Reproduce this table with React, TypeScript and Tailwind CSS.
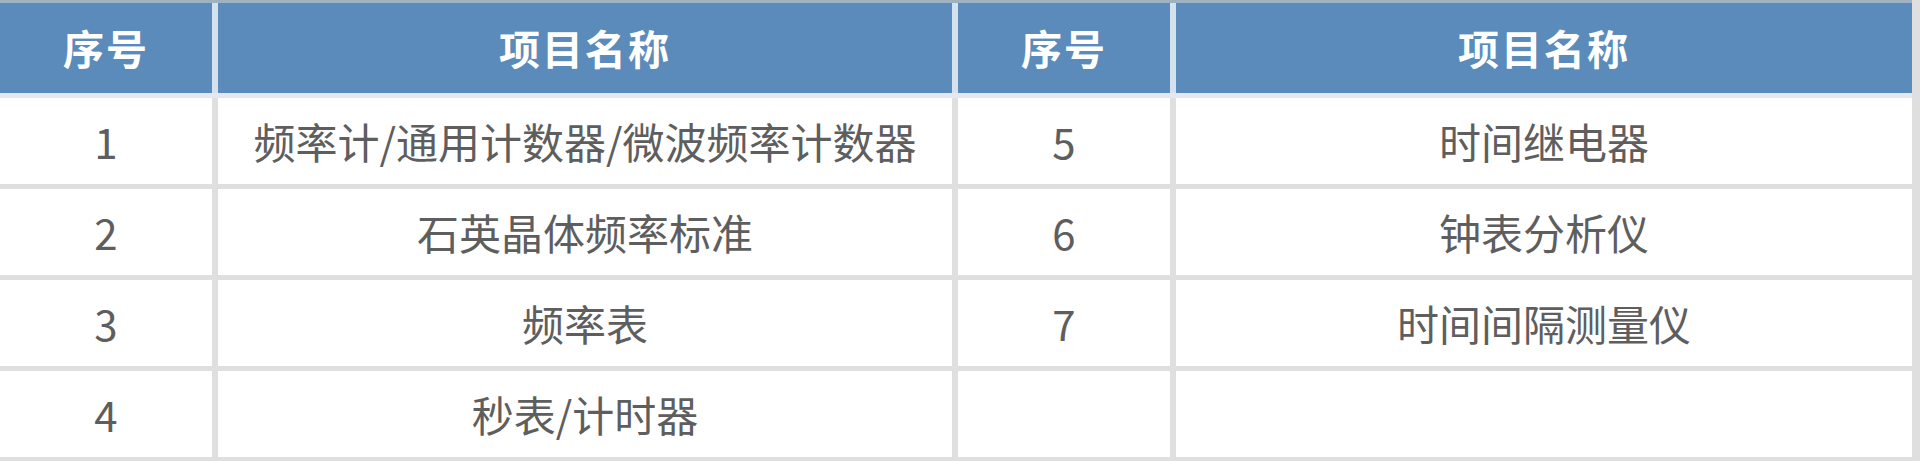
const rows: [string, string, string, string][] = [
  ['1', '频率计/通用计数器/微波频率计数器', '5', '时间继电器'],
  ['2', '石英晶体频率标准', '6', '钟表分析仪'],
  ['3', '频率表', '7', '时间间隔测量仪'],
  ['4', '秒表/计时器', '', ''],
]

const FONT = { fontFamily: '"Microsoft YaHei", "Noto Sans CJK SC", "Noto Sans", sans-serif' }

const cols = 'grid grid-cols-[212px_734px_212px_736px] gap-x-[6px]'

export default function App() {
  return (
    <div className="w-[1920px] h-[461px] bg-[#dfdfdf] overflow-hidden" style={FONT}>
      <div className="h-[3px] w-[1912px] bg-[#9fb2c4]" />
      <div className={`${cols} w-[1912px] bg-[#d4e2ee]`}>
        {['序号', '项目名称', '序号', '项目名称'].map((h, i) => (
          <div
            key={i}
            className="h-[90px] bg-[#5a8bba] flex items-center justify-center text-white font-bold text-[41px] tracking-[2px]"
          >
            {h}
          </div>
        ))}
      </div>
      <div className="h-[5px] w-[1912px] bg-[#e3e9ef]" />
      <div className={`${cols} gap-y-[5px]`}>
        {rows.map((r, ri) =>
          r.map((c, ci) => (
            <div
              key={`${ri}-${ci}`}
              className="h-[86px] bg-white flex items-center justify-center text-[#5e5e5e] text-[42px] pb-[2px]"
            >
              {c}
            </div>
          ))
        )}
      </div>
    </div>
  )
}
